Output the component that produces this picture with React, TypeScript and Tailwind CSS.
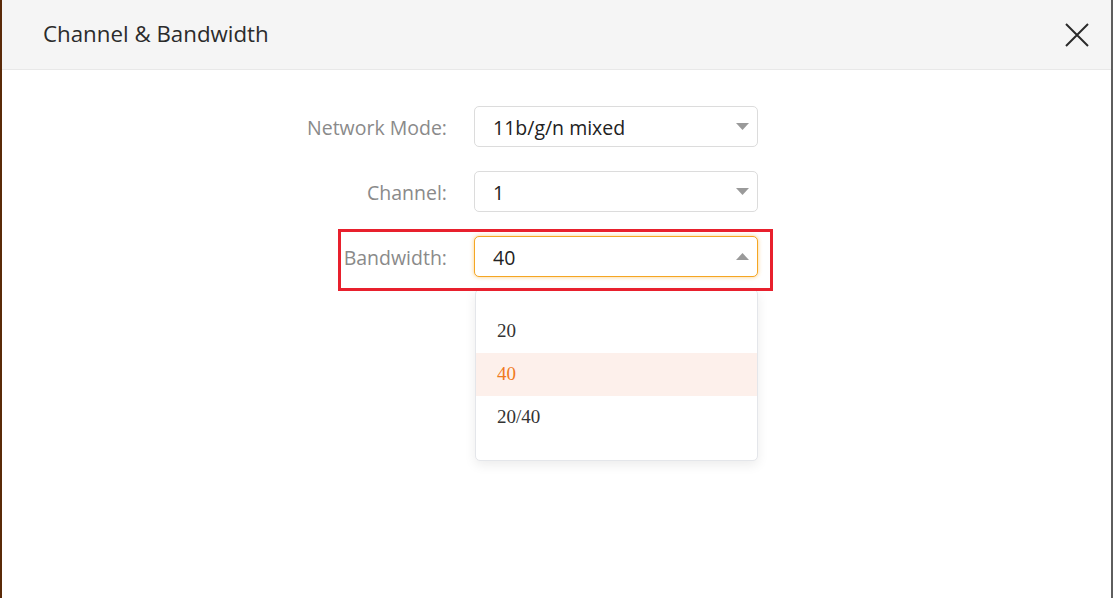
import { useState } from 'react'

const FIELDS = [
    { key: 'mode', label: 'Network Mode:', value: '11b/g/n mixed' },
    { key: 'channel', label: 'Channel:', value: '1' },
]

const BANDWIDTHS = ['20', '40', '20/40']

function Caret({ up }: { up?: boolean }) {
    return (
        <svg width="13" height="7" viewBox="0 0 13 7" className="shrink-0">
            {up
                ? <path d="M0 7 L6.5 0 L13 7 Z" fill="#9a9a9a" />
                : <path d="M0 0 L13 0 L6.5 7 Z" fill="#9a9a9a" />}
        </svg>
    )
}

function SelectBox({ value, open }: { value: string, open?: boolean }) {
    return (
        <div
            className={`flex h-[41px] w-[284px] items-center justify-between rounded-[5px] border bg-white pl-[18px] pr-[8px] ${open
                ? 'border-[#f5a623] shadow-[0_0_4px_rgba(245,166,35,0.55)]'
                : 'border-[#dcdcdc]'}`}
        >
            <span className="pt-[2px] text-[19.5px] text-[#222]">{value}</span>
            <Caret up={open} />
        </div>
    )
}

export default function App() {
    const [bandwidth, setBandwidth] = useState('40')

    return (
        <div
            className="flex h-[598px] w-full flex-col overflow-hidden border-l-2 border-r-2 border-l-[#5a2a08] border-r-[#5e5e5e] bg-white"
            style={{ fontFamily: '"Open Sans", "Noto Sans", sans-serif' }}
        >
            <div className="flex h-[70px] shrink-0 items-center justify-between border-b border-[#e8e8e8] bg-[#f5f5f5] pl-[41px] pr-[22px]">
                <h1 className="pb-[1px] text-[22.3px] font-normal text-[#2b2b2b]">Channel &amp; Bandwidth</h1>
                <button className="text-[#333]">
                    <svg width="24" height="24" viewBox="0 0 24 24">
                        <path d="M1 1 L23 23 M23 1 L1 23" stroke="#2a2a2a" strokeWidth="2" />
                    </svg>
                </button>
            </div>

            <div className="flex flex-col gap-[24px] pl-[285px] pt-[36px]">
                {FIELDS.map((f) => (
                    <div key={f.key} className="flex items-center gap-[27px]">
                        <label className="w-[160px] pt-[2px] text-right text-[19.5px] text-[#8a8a8a]">{f.label}</label>
                        <SelectBox value={f.value} />
                    </div>
                ))}

                <div className="relative flex items-center gap-[27px]">
                    <label className="w-[160px] pt-[2px] text-right text-[19.5px] text-[#8a8a8a]">Bandwidth:</label>
                    <SelectBox value={bandwidth} open />

                    {/* option list */}
                    <div
                        className="absolute left-[188px] top-[53px] z-10 w-[283px] rounded-[5px] border border-[#e4e6ea] bg-white pb-[21px] pt-[20px] shadow-[0_4px_12px_rgba(0,0,0,0.08)]"
                        style={{ fontFamily: '"Liberation Serif", "Times New Roman", serif' }}
                    >
                        {BANDWIDTHS.map((b) => (
                            <div
                                key={b}
                                onClick={() => setBandwidth(b)}
                                className={`flex h-[43px] items-center pl-[21px] text-[19px] ${b === bandwidth
                                    ? 'bg-[#fdf0eb] text-[#f07a1e]'
                                    : 'text-[#333]'}`}
                            >
                                {b}
                            </div>
                        ))}
                    </div>

                    {/* highlight frame */}
                    <div className="pointer-events-none absolute left-[51px] top-[-7px] z-20 h-[62px] w-[435px] border-[3px] border-[#e8202d]" />
                </div>
            </div>
        </div>
    )
}
